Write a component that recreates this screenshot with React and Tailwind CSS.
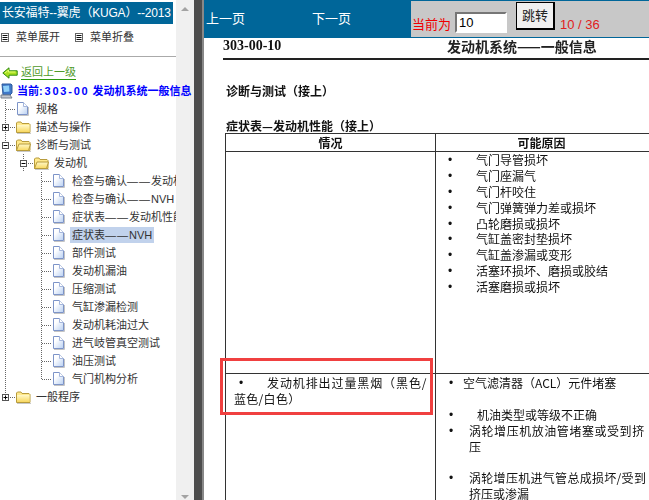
import React from 'react';

const treeRows = [
  { depth: 0, type: 'doc', label: '规格' },
  { depth: 0, type: 'closed', label: '描述与操作' },
  { depth: 0, type: 'open', label: '诊断与测试' },
  { depth: 1, type: 'open', label: '发动机' },
  { depth: 2, type: 'doc', label: '检查与确认', tail: '发动机性能' },
  { depth: 2, type: 'doc', label: '检查与确认', tail: 'NVH' },
  { depth: 2, type: 'doc', label: '症状表', tail: '发动机性能' },
  { depth: 2, type: 'doc', label: '症状表', tail: 'NVH', selected: true },
  { depth: 2, type: 'doc', label: '部件测试' },
  { depth: 2, type: 'doc', label: '发动机漏油' },
  { depth: 2, type: 'doc', label: '压缩测试' },
  { depth: 2, type: 'doc', label: '气缸渗漏检测' },
  { depth: 2, type: 'doc', label: '发动机耗油过大' },
  { depth: 2, type: 'doc', label: '进气岐管真空测试' },
  { depth: 2, type: 'doc', label: '油压测试' },
  { depth: 2, type: 'doc', label: '气门机构分析', last: true },
  { depth: 0, type: 'closed', label: '一般程序', last: true },
];

const causes = [
  '气门导管损坏',
  '气门座漏气',
  '气门杆咬住',
  '气门弹簧弹力差或损坏',
  '凸轮磨损或损坏',
  '气缸盖密封垫损坏',
  '气缸盖渗漏或变形',
  '活塞环损坏、磨损或胶结',
  '活塞磨损或损坏',
];

function MenuIcon() {
  return (
    <svg width="8" height="9" viewBox="0 0 8 9" className="shrink-0">
      <rect x="0.500" y="0.500" width="7" height="8" fill="#fff" stroke="#666" />
      <path d="M1.500 2.500h5M1.500 4.500h5M1.500 6.500h5" stroke="#111" />
    </svg>
  );
}

function BackArrow() {
  return (
    <svg width="16" height="12" viewBox="0 0 16 12" className="shrink-0">
      <path d="M.8 6 7 .8v3h8.200v4.400H7v3z" fill="#a8e020" stroke="#2f8a10" />
      <path d="M3 6 6.500 3v2h7" fill="none" stroke="#e4ff70" />
    </svg>
  );
}

function ComputerIcon() {
  return (
    <svg width="13" height="16" viewBox="0 0 13 16" className="shrink-0">
      <path d="M2 1h9l1 1v8l-2 2H3z" fill="#3f78c8" stroke="#2f5b9c" />
      <path d="M3 3l6-.500.500 6-5.500.500z" fill="#8fd0f8" />
      <path d="M1 12h9l2 3H1z" fill="#c4c8d0" stroke="#77808c" />
    </svg>
  );
}

function DocIcon() {
  return (
    <svg width="13" height="16" viewBox="0 0 13 16" className="shrink-0">
      <defs>
        <linearGradient id="docFill" x1="0" y1="0" x2="1" y2="1">
          <stop offset="0.3" stopColor="#ffffff" />
          <stop offset="1" stopColor="#b9d0f2" />
        </linearGradient>
      </defs>
      <path d="M1.500 1.500h6l4 4v8h-10z" fill="url(#docFill)" stroke="#7d94c8" />
      <path d="M2 14.500h10.500V6" fill="none" stroke="#c4c4c4" />
      <path d="M7.500 1.500v4h4" fill="#fff" stroke="#a5b6dc" />
    </svg>
  );
}

function FolderIcon({ open }) {
  return (
    <svg width="15" height="14" viewBox="0 0 15 14" className="shrink-0">
      <defs>
        <linearGradient id="folderFill" x1="0" y1="0" x2="0" y2="1">
          <stop offset="0" stopColor="#fff8c8" />
          <stop offset="1" stopColor="#f8d860" />
        </linearGradient>
      </defs>
      <path d="M.500 12.500V3l1-1h3.500l1 1.500h7l1 1v8z" fill="#ffe98c" stroke="#b79b3c" />
      {open ? (
        <path d="M.500 12.500 3 6h11.500l-2 6.500z" fill="url(#folderFill)" stroke="#b79b3c" />
      ) : (
        <path d="M1 5h12.500v7H1z" fill="url(#folderFill)" />
      )}
      <path d="M1 13.500h14" stroke="#c8c8c8" />
    </svg>
  );
}

// one 18px guide column of the tree, with the dotted line at x=5
function Guide({ line }) {
  return (
    <svg width="18" height="18" viewBox="0 0 18 18" className="shrink-0">
      {line && <path d="M5.500 0v18" stroke="#666" strokeDasharray="1 1" />}
    </svg>
  );
}

function Connector({ toggle, last }) {
  return (
    <svg width="16" height="18" viewBox="0 0 16 18" className="shrink-0">
      <path d={last ? 'M5.500 0v9' : 'M5.500 0v18'} stroke="#666" strokeDasharray="1 1" />
      <path d="M6 9.500h10" stroke="#666" strokeDasharray="1 1" />
      {toggle && (
        <>
          <rect x="2.500" y="6.500" width="6" height="6" fill="#fff" stroke="#555" />
          <path d="M3.500 9.500h4" stroke="#000" />
          {toggle === 'closed' && <path d="M5.500 7.500v4" stroke="#000" />}
        </>
      )}
    </svg>
  );
}

function TreeRow({ row }) {
  const guides = [];
  if (row.depth > 0) guides.push(<Guide key="a" line />);
  if (row.depth > 1) guides.push(<Guide key="b" />);
  return (
    <div className="flex h-[18px] items-center overflow-hidden whitespace-nowrap text-[#333]">
      {guides}
      <Connector toggle={row.type === 'doc' ? null : row.type} last={row.last} />
      <div className="w-[20px] shrink-0">
        {row.type === 'doc' ? <DocIcon /> : <FolderIcon open={row.type === 'open'} />}
      </div>
      <span className={row.selected ? 'ml-[-2px] bg-[#c1d2ec] px-[2px] leading-[16px]' : ''}>
        {row.label}
        {row.tail && (
          <>
            <span className="tracking-[1px]">——</span>
            {row.tail}
          </>
        )}
      </span>
    </div>
  );
}

function Sidebar() {
  return (
    <div className="relative z-10 flex w-[176px] shrink-0 flex-col pt-[2px] text-[11px] font-['Liberation_Sans','Noto_Sans_CJK_SC',sans-serif]">
      <div className="mr-[3px] flex h-[22px] items-center whitespace-nowrap bg-[#006699] pl-[2px] text-[12px] tracking-[-0.2px] text-white">
        长安福特--翼虎（KUGA）--2013
      </div>
      <div className="mt-[3px] flex h-[20px] items-center text-[#333]">
        <div className="ml-[1px]"><MenuIcon /></div>
        <span className="ml-[7px]">菜单展开</span>
        <div className="ml-[15px]"><MenuIcon /></div>
        <span className="ml-[7px]">菜单折叠</span>
      </div>
      <div className="mt-[9px] h-[1px] bg-[#aaa]"></div>
      <div className="mt-[7px] flex h-[17px] items-center pl-[2px]">
        <BackArrow />
        <span className="ml-[3px] border-b border-[#2f9a10] leading-[14px] text-[#4f9a2a]">返回上一级</span>
      </div>
      <div className="mt-[1px] flex h-[18px] items-center whitespace-nowrap font-bold text-[#0000ff]">
        <ComputerIcon />
        <span className="ml-[4px]">当前<span className="tracking-[1.800px]">:303-00</span> 发动机系统一般信息</span>
      </div>
      {treeRows.map((row, i) => (
        <TreeRow key={i} row={row} />
      ))}
    </div>
  );
}

function Scrollbar() {
  return (
    <div className="flex w-[18px] shrink-0 flex-col items-center justify-between bg-[#f0f0f0] py-[7px] text-[#a3a3a3]">
      <svg width="8" height="4" viewBox="0 0 8 4"><path d="M0 4 4 0l4 4z" fill="currentColor" /></svg>
      <svg width="8" height="4" viewBox="0 0 8 4" className="mb-[-6px]"><path d="M0 0h8L4 4z" fill="currentColor" /></svg>
    </div>
  );
}

function TopBar() {
  return (
    <div className="flex h-[38px] shrink-0 bg-[#006699] pt-[1px] pb-[1px] font-['Liberation_Sans','Noto_Sans_CJK_SC',sans-serif]">
      <div className="flex w-[207px] shrink-0 items-center pl-[2px] text-[13px] text-white">
        <span>上一页</span>
        <span className="ml-[67px]">下一页</span>
      </div>
      <div className="flex flex-1 bg-[#c8c8c8] pl-[1px] text-[13px] text-[#f00000]">
        <span className="mt-[15px] leading-[18px]">当前为</span>
        <input
          readOnly
          value="10"
          className="ml-[4px] mt-[11px] h-[21px] w-[52px] border-2 border-t-[#767676] border-l-[#767676] border-r-white border-b-white bg-white pl-[2px] text-[13px] text-black outline-none"
        />
        <button className="ml-[9px] mt-[1px] h-[28px] w-[39px] border border-r-2 border-b-2 border-black bg-[#f0f0f0] text-[13px] text-[#222]">
          跳转
        </button>
        <span className="ml-[5px] mt-[15px] leading-[18px] text-[#e02020]">10 / 36</span>
      </div>
    </div>
  );
}

function Dot({ className }) {
  return <span className={`shrink-0 font-['Liberation_Sans',sans-serif] ${className}`}>•</span>;
}

function DocPage() {
  return (
    <div className="relative flex-1 overflow-hidden bg-white pl-[19px] text-[#111] blur-[0.3px] font-['Noto_Sans_CJK_SC','Liberation_Sans',sans-serif]">
      <div className="flex h-[22px] items-end border-b-2 border-[#222] pb-[3px] font-bold">
        <span className="w-[224px] text-[14px] leading-[18px] font-['Liberation_Serif',serif]">303-00-10</span>
        <span className="text-[14px] leading-[18px] text-[#222]">发动机系统——一般信息</span>
      </div>
      <div className="mt-[23px] pl-[3px] text-[12px] leading-[16px] font-bold">诊断与测试（接上）</div>
      <div className="mt-[19px] pl-[3px] text-[12px] leading-[16px] font-bold">症状表—发动机性能（接上）</div>
      <table className="ml-[2px] mt-[-1px] w-[560px] table-fixed border-collapse text-[12px] leading-[16px]">
        <colgroup>
          <col className="w-[210px]" />
          <col />
        </colgroup>
        <tbody>
          <tr className="h-[17px]">
            <th className="border border-[#333] p-0 pt-[1px] text-center">情况</th>
            <th className="border border-[#333] p-0 pt-[1px] pr-[137px] text-center">可能原因</th>
          </tr>
          <tr className="h-[222px]">
            <td className="border border-[#333] p-0"></td>
            <td className="border border-[#333] p-0 pl-[12px] align-top">
              {causes.map((c) => (
                <div key={c} className="flex h-[15.900px]">
                  <Dot className="w-[28px]" />
                  <span>{c}</span>
                </div>
              ))}
            </td>
          </tr>
          <tr>
            <td className="border border-[#333] p-0 pl-[8px] pt-[1px] align-top whitespace-nowrap">
              <div className="flex">
                <Dot className="ml-[5px] w-[28px]" />
                <span className="tracking-[0.900px]">发动机排出过量黑烟（黑色/</span>
              </div>
              <div className="tracking-[0.300px]">蓝色/白色）</div>
            </td>
            <td className="h-[140px] border border-[#333] p-0 pl-[13px] pt-[1px] align-top whitespace-nowrap">
              <div className="flex">
                <Dot className="w-[14px]" />
                <span>空气滤清器（ACL）元件堵塞</span>
              </div>
              <div className="mt-[16px] flex">
                <Dot className="w-[28px]" />
                <span>机油类型或等级不正确</span>
              </div>
              <div className="flex">
                <Dot className="w-[20px]" />
                <span className="tracking-[0.550px]">涡轮增压机放油管堵塞或受到挤</span>
              </div>
              <div className="pl-[20px]">压</div>
              <div className="mt-[15px] flex">
                <Dot className="w-[20px]" />
                <span className="tracking-[0.300px]">涡轮增压机进气管总成损坏/受到</span>
              </div>
              <div className="pl-[20px]">挤压或渗漏</div>
            </td>
          </tr>
        </tbody>
      </table>
    </div>
  );
}

export default function App() {
  return (
    <div className="flex h-[500px] w-[649px] overflow-hidden bg-white">
      <Sidebar />
      <Scrollbar />
      <div className="w-[10px] shrink-0 border-r-2 border-[#888] bg-[#4d4d4d]"></div>
      <div className="relative flex min-w-0 flex-1 flex-col">
        <TopBar />
        <DocPage />
        {/* red annotation box drawn over the page */}
        <div className="absolute left-[16px] top-[358px] h-[57px] w-[213px] border-[3px] border-[#f04040]"></div>
      </div>
    </div>
  );
}
